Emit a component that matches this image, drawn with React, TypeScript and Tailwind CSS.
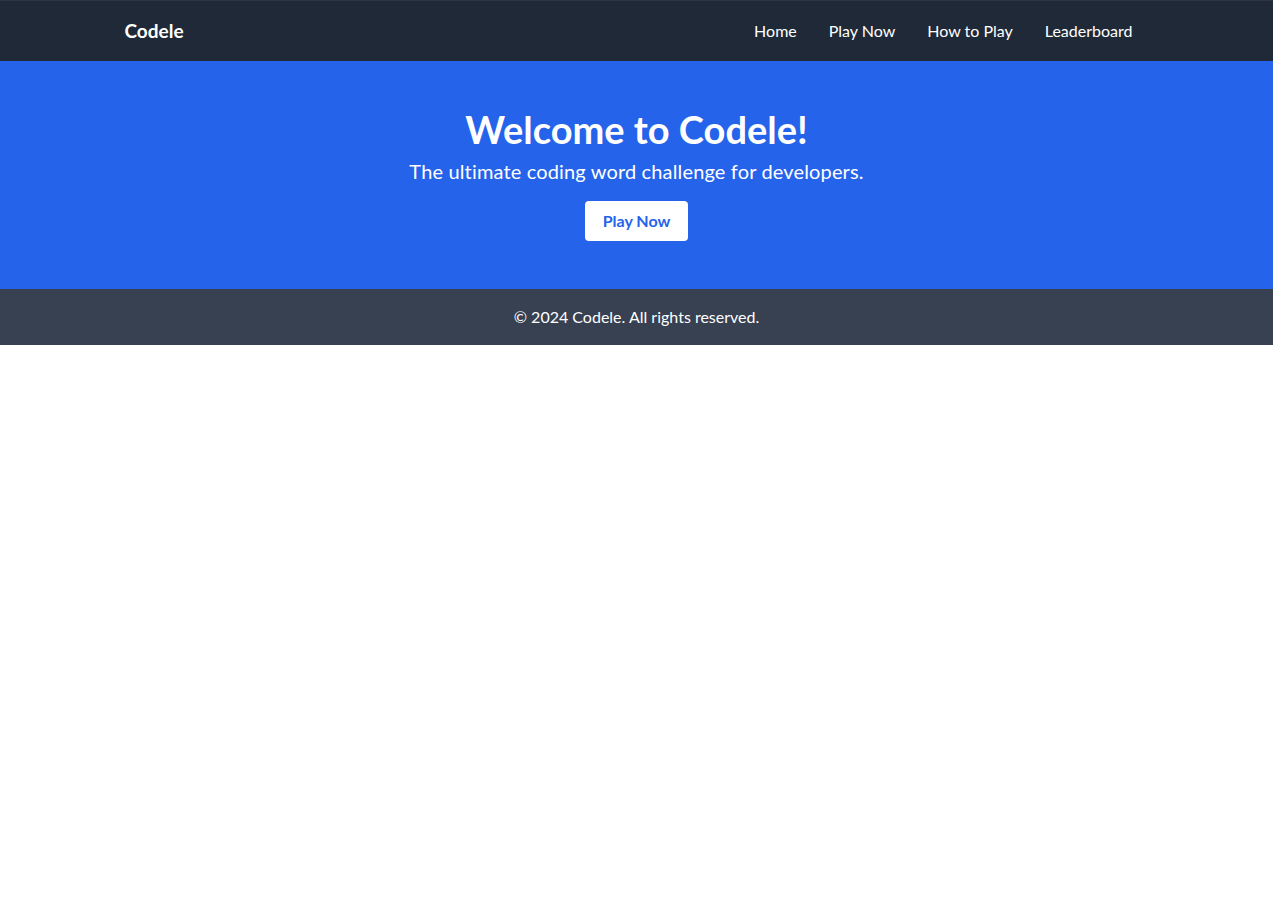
import React from "react";

export default function App() {
  const font = { fontFamily: 'Lato, "Noto Sans", sans-serif' };
  return (
    <div className="min-h-screen bg-white text-white" style={font}>
      <nav className="bg-[#1f2937] border-t border-[#2e3540]">
        <div className="w-[1024px] mx-auto flex items-center justify-between py-4">
          <span className="text-[19px] leading-7 font-bold">Codele</span>
          <div className="flex">
            <a className="px-4">Home</a>
            <a className="px-4">Play Now</a>
            <a className="px-4">How to Play</a>
            <a className="px-4">Leaderboard</a>
          </div>
        </div>
      </nav>
      <section className="bg-[#2563eb] py-12 text-center">
        <h1 className="text-[38px] leading-10 font-bold mb-2">Welcome to Codele!</h1>
        <p className="text-xl leading-7 mb-4 tracking-[0.15px]">The ultimate coding word challenge for developers.</p>
        <button className="bg-white text-[#2563eb] font-bold px-[18px] py-2 rounded leading-6">Play Now</button>
      </section>
      <footer className="bg-[#374151] py-4 text-center leading-6">© 2024 Codele. All rights reserved.</footer>
    </div>
  );
}
